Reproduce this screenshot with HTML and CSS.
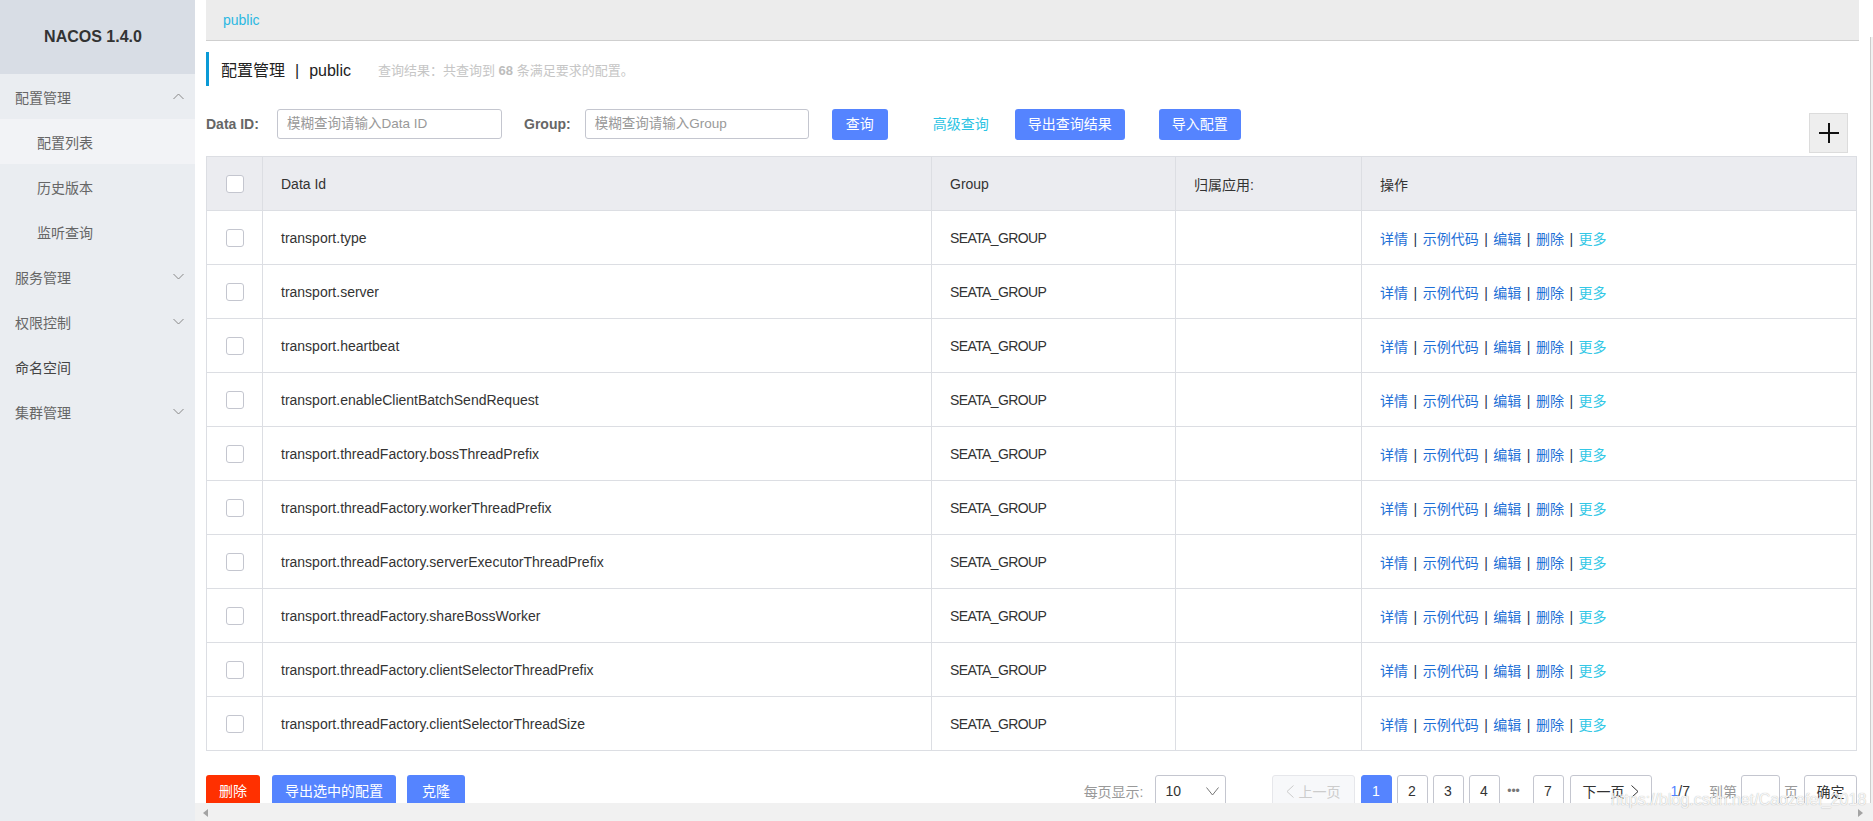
FILE: index.html
```html
<!DOCTYPE html>
<html lang="zh-CN">
<head>
<meta charset="utf-8">
<title>NACOS 1.4.0</title>
<link rel="stylesheet" href="styles.css">
</head>
<body>
<div class="app">
  <aside class="sidebar">
    <div class="brand">NACOS 1.4.0</div>
    <ul class="menu">
      <li class="group"><span>配置管理</span><svg class="chev" viewBox="0 0 11 7" width="11" height="7"><polyline points="0.5,6 5.5,1 10.5,6"/></svg></li>
      <li class="sub active">配置列表</li>
      <li class="sub">历史版本</li>
      <li class="sub">监听查询</li>
      <li class="group"><span>服务管理</span><svg class="chev" viewBox="0 0 11 7" width="11" height="7"><polyline points="0.5,1 5.5,6 10.5,1"/></svg></li>
      <li class="group"><span>权限控制</span><svg class="chev" viewBox="0 0 11 7" width="11" height="7"><polyline points="0.5,1 5.5,6 10.5,1"/></svg></li>
      <li class="group dark"><span>命名空间</span></li>
      <li class="group"><span>集群管理</span><svg class="chev" viewBox="0 0 11 7" width="11" height="7"><polyline points="0.5,1 5.5,6 10.5,1"/></svg></li>
    </ul>
  </aside>

  <main class="main">
    <div class="ns-bar"><span class="ns-link">public</span></div>

    <div class="title-row">
      <span class="title">配置管理<span class="title-sep">|</span>public</span>
      <span class="summary">查询结果：共查询到 <b>68</b> 条满足要求的配置。</span>
    </div>

    <div class="filter-row">
      <span class="f-label id-label">Data ID:</span>
      <div class="f-input">模糊查询请输入Data ID</div>
      <span class="f-label group-label">Group:</span>
      <div class="f-input">模糊查询请输入Group</div>
      <button class="btn btn-query">查询</button>
      <span class="adv-link">高级查询</span>
      <button class="btn btn-export">导出查询结果</button>
      <button class="btn btn-import">导入配置</button>
      <button class="plus-btn" aria-label="新建">
        <svg viewBox="0 0 22 22" width="22" height="22"><line x1="1" y1="11" x2="21" y2="11"/><line x1="11" y1="1" x2="11" y2="21"/></svg>
      </button>
    </div>

    <table class="cfg-table">
      <colgroup>
        <col class="c-check"><col class="c-id"><col class="c-group"><col class="c-app"><col>
      </colgroup>
      <thead>
        <tr><th class="cb-cell"><span class="cb"></span></th><th>Data Id</th><th>Group</th><th>归属应用:</th><th>操作</th></tr>
      </thead>
      <tbody>
        <tr><td class="cb-cell"><span class="cb"></span></td><td>transport.type</td><td class="grp">SEATA_GROUP</td><td></td><td class="ops"><a>详情</a><i>|</i><a>示例代码</a><i>|</i><a>编辑</a><i>|</i><a>删除</a><i>|</i><a class="more">更多</a></td></tr>
        <tr><td class="cb-cell"><span class="cb"></span></td><td>transport.server</td><td class="grp">SEATA_GROUP</td><td></td><td class="ops"><a>详情</a><i>|</i><a>示例代码</a><i>|</i><a>编辑</a><i>|</i><a>删除</a><i>|</i><a class="more">更多</a></td></tr>
        <tr><td class="cb-cell"><span class="cb"></span></td><td>transport.heartbeat</td><td class="grp">SEATA_GROUP</td><td></td><td class="ops"><a>详情</a><i>|</i><a>示例代码</a><i>|</i><a>编辑</a><i>|</i><a>删除</a><i>|</i><a class="more">更多</a></td></tr>
        <tr><td class="cb-cell"><span class="cb"></span></td><td>transport.enableClientBatchSendRequest</td><td class="grp">SEATA_GROUP</td><td></td><td class="ops"><a>详情</a><i>|</i><a>示例代码</a><i>|</i><a>编辑</a><i>|</i><a>删除</a><i>|</i><a class="more">更多</a></td></tr>
        <tr><td class="cb-cell"><span class="cb"></span></td><td>transport.threadFactory.bossThreadPrefix</td><td class="grp">SEATA_GROUP</td><td></td><td class="ops"><a>详情</a><i>|</i><a>示例代码</a><i>|</i><a>编辑</a><i>|</i><a>删除</a><i>|</i><a class="more">更多</a></td></tr>
        <tr><td class="cb-cell"><span class="cb"></span></td><td>transport.threadFactory.workerThreadPrefix</td><td class="grp">SEATA_GROUP</td><td></td><td class="ops"><a>详情</a><i>|</i><a>示例代码</a><i>|</i><a>编辑</a><i>|</i><a>删除</a><i>|</i><a class="more">更多</a></td></tr>
        <tr><td class="cb-cell"><span class="cb"></span></td><td>transport.threadFactory.serverExecutorThreadPrefix</td><td class="grp">SEATA_GROUP</td><td></td><td class="ops"><a>详情</a><i>|</i><a>示例代码</a><i>|</i><a>编辑</a><i>|</i><a>删除</a><i>|</i><a class="more">更多</a></td></tr>
        <tr><td class="cb-cell"><span class="cb"></span></td><td>transport.threadFactory.shareBossWorker</td><td class="grp">SEATA_GROUP</td><td></td><td class="ops"><a>详情</a><i>|</i><a>示例代码</a><i>|</i><a>编辑</a><i>|</i><a>删除</a><i>|</i><a class="more">更多</a></td></tr>
        <tr><td class="cb-cell"><span class="cb"></span></td><td>transport.threadFactory.clientSelectorThreadPrefix</td><td class="grp">SEATA_GROUP</td><td></td><td class="ops"><a>详情</a><i>|</i><a>示例代码</a><i>|</i><a>编辑</a><i>|</i><a>删除</a><i>|</i><a class="more">更多</a></td></tr>
        <tr><td class="cb-cell"><span class="cb"></span></td><td>transport.threadFactory.clientSelectorThreadSize</td><td class="grp">SEATA_GROUP</td><td></td><td class="ops"><a>详情</a><i>|</i><a>示例代码</a><i>|</i><a>编辑</a><i>|</i><a>删除</a><i>|</i><a class="more">更多</a></td></tr>
      </tbody>
    </table>

    <div class="footer-row">
      <button class="btn btn-danger">删除</button>
      <button class="btn btn-foot">导出选中的配置</button>
      <button class="btn btn-foot">克隆</button>

      <div class="pager">
        <span class="page-size-label">每页显示:</span>
        <div class="page-size">
          <span>10</span>
          <svg viewBox="0 0 13 9" width="13" height="9"><polyline points="0.5,0.5 6.5,8 12.5,0.5"/></svg>
        </div>
        <div class="pages">
          <span class="pg pg-prev disabled">
            <svg viewBox="0 0 8 13" width="8" height="13"><polyline points="7.5,0.5 1,6.5 7.5,12.5"/></svg>上一页
          </span>
          <span class="pg num current">1</span>
          <span class="pg num">2</span>
          <span class="pg num">3</span>
          <span class="pg num">4</span>
          <span class="pg-ellipsis">•••</span>
          <span class="pg num">7</span>
          <span class="pg pg-next">下一页
            <svg viewBox="0 0 8 13" width="8" height="13"><polyline points="0.5,0.5 7,6.5 0.5,12.5"/></svg>
          </span>
        </div>
        <span class="pg-display"><em>1</em>/7</span>
        <span class="pg-goto">到第</span>
        <div class="pg-input"></div>
        <span class="pg-unit">页</span>
        <span class="pg pg-ok">确定</span>
      </div>
    </div>
  </main>

  <div class="vscroll"></div>
  <div class="hscroll">
    <svg class="arr-l" viewBox="0 0 5 8" width="5" height="8"><polygon points="5,0 0,4 5,8"/></svg>
    <svg class="arr-r" viewBox="0 0 5 8" width="5" height="8"><polygon points="0,0 5,4 0,8"/></svg>
  </div>
  <div class="watermark">https://blog.csdn.net/Caozefei_2018</div>
</div>
</body>
</html>
```
FILE: styles.css
```css
* { box-sizing: border-box; }
html, body { margin: 0; height: 100%; }
body {
  font-family: "Liberation Sans", "Noto Sans CJK SC", sans-serif;
  font-size: 14px;
  color: #333;
  background: #fff;
  overflow: hidden;
}

.app {
  position: relative;
  display: grid;
  grid-template-columns: 195px 1fr;
  height: 821px;
  width: 1873px;
}

/* ---------- sidebar ---------- */
.sidebar { background: #eaedf1; }
.brand {
  height: 74px;
  background: #d8dde5;
  display: flex;
  align-items: center;
  justify-content: center;
  padding-right: 9px;
  font-weight: bold;
  font-size: 16px;
  color: #333;
}
.menu { list-style: none; margin: 0; padding: 0; }
.menu li {
  height: 45px;
  display: flex;
  align-items: center;
  justify-content: space-between;
  padding: 0 11px 0 15px;
  color: #666;
  font-size: 14px;
}
.menu li.sub { padding-left: 37px; }
.menu li.active { background: #f2f3f6; }
.menu li.dark { color: #444; }
.chev { fill: none; stroke: #888; stroke-width: 1; }

/* ---------- main ---------- */
.main { padding: 0 15px 0 11px; min-width: 0; }

.ns-bar {
  height: 41px;
  background: #ececec;
  border-bottom: 1px solid #cfcfcf;
  padding-left: 17px;
  display: flex;
  align-items: center;
  margin-right: -1px;
}
.ns-link { color: #2bb8e2; font-size: 14px; }

.title-row {
  margin-top: 11px;
  height: 34px;
  border-left: 3px solid #0a9ad6;
  padding-left: 12px;
  display: flex;
  align-items: center;
}
.title { font-size: 16px; color: #222; }
.title-sep { margin: 0 10px; }
.summary { margin-left: 27px; font-size: 13px; color: #c6c6c6; }
.summary b { color: #bdbdbd; }

.filter-row {
  margin-top: 23px;
  height: 44px;
  display: flex;
  align-items: flex-start;
}
.f-label {
  font-weight: bold;
  color: #666;
  line-height: 30px;
  margin-right: 13px;
}
.id-label { width: 58px; margin-right: 13px; }
.group-label { margin-left: 22px; margin-right: 14px; }
.f-input {
  width: 225px;
  height: 30px;
  border: 1px solid #c4c6cf;
  border-radius: 3px;
  padding: 0 9px;
  line-height: 28px;
  color: #999;
  font-size: 13.5px;
}
.f-input + .group-label + .f-input { width: 224px; }
.btn {
  height: 31px;
  padding: 0 14px;
  border: none;
  border-radius: 3px;
  background: #5584ff;
  color: #fff;
  font-family: inherit;
  font-size: 14px;
  line-height: 31px;
}
.btn-query { margin-left: 23px; }
.adv-link { margin-left: 45px; line-height: 30px; color: #2bc3e3; }
.btn-export { margin-left: 26px; padding: 0 13px; }
.btn-import { margin-left: 34px; padding: 0 13px; }
.plus-btn {
  margin-left: auto;
  margin-right: 10px;
  margin-top: 4px;
  width: 39px;
  height: 40px;
  padding: 0;
  background: #eeeeee;
  border: 1px solid #dcdcdc;
  display: flex;
  align-items: center;
  justify-content: center;
}
.plus-btn svg { stroke: #111; stroke-width: 2; }

/* ---------- table ---------- */
.cfg-table {
  width: calc(100% - 1px);
  border-collapse: collapse;
  table-layout: fixed;
  margin-top: 3px;
}
.c-check { width: 56px; }
.c-id { width: 669px; }
.c-group { width: 244px; }
.c-app { width: 186px; }
.cfg-table tr { height: 54px; }
.cfg-table th,
.cfg-table td {
  border: 1px solid #dcdee3;
  padding: 0 0 0 18px;
  text-align: left;
  font-weight: normal;
  font-size: 14px;
  color: #333;
  white-space: nowrap;
}
.cfg-table th { background: #ebecf0; }
.cfg-table .cb-cell { padding: 0; text-align: center; }
.cb {
  display: inline-block;
  width: 18px;
  height: 18px;
  border: 1px solid #c4c6cf;
  border-radius: 3px;
  background: #fff;
  vertical-align: middle;
}
.grp { letter-spacing: -0.6px; font-size: 13.5px; }
.ops a { color: #1e6fd6; }
.ops i { font-style: normal; color: #2a3550; margin: 0 5.5px; }
.ops a.more { color: #33c8e6; }

/* ---------- footer ---------- */
.footer-row {
  margin-top: 24px;
  height: 32px;
  display: flex;
  align-items: center;
}
.btn-danger { background: #ff3000; height: 32px; padding: 0 13px; }
.btn-foot { height: 32px; margin-left: 12px; padding: 0 13px; }
.btn-foot + .btn-foot { margin-left: 11px; padding: 0 15px; }

.pager {
  margin-left: auto;
  margin-right: 1px;
  display: flex;
  align-items: center;
  height: 32px;
}
.page-size-label { color: #999; }
.page-size {
  margin-left: 11px;
  width: 71px;
  height: 32px;
  border: 1px solid #c4c6cf;
  border-radius: 3px;
  padding: 0 6px 0 10px;
  display: flex;
  align-items: center;
  justify-content: space-between;
  color: #333;
}
.page-size svg { fill: none; stroke: #777; stroke-width: 1; }
.pages { margin-left: 46px; display: flex; align-items: center; }
.pg {
  height: 32px;
  border: 1px solid #c4c6cf;
  border-radius: 3px;
  background: #fff;
  display: flex;
  align-items: center;
  justify-content: center;
  color: #333;
}
.pg.num { width: 31px; margin-left: 5px; }
.pg.current { background: #5584ff; border-color: #5584ff; color: #fff; margin-left: 6px; }
.pg-prev { width: 83px; gap: 5px; }
.pg-prev.disabled { background: #f7f8fa; border-color: #e6e7eb; color: #ccc; }
.pg-prev svg { fill: none; stroke: #ccc; stroke-width: 1; }
.pg-ellipsis {
  width: 28px;
  text-align: center;
  color: #777;
  font-size: 12px;
  letter-spacing: 0;
}
.pg-next { width: 82px; margin-left: 6px; gap: 6px; }
.pg-next svg { fill: none; stroke: #333; stroke-width: 1; }
.pg-display { margin-left: 19px; color: #333; }
.pg-display em { font-style: normal; color: #5584ff; }
.pg-goto { margin-left: 19px; color: #999; }
.pg-input {
  margin-left: 4px;
  width: 39px;
  height: 32px;
  border: 1px solid #c4c6cf;
  border-radius: 3px;
}
.pg-unit { margin-left: 4px; color: #999; }
.pg-ok { margin-left: 6px; width: 53px; }

/* ---------- overlays: browser scrollbars & watermark ---------- */
.vscroll {
  position: absolute;
  left: 1870px;
  top: 37px;
  width: 3px;
  height: 766px;
  background: #f1f1f1;
  border-left: 1px solid #cdcdcd;
}
.hscroll {
  position: absolute;
  left: 195px;
  right: 0;
  top: 803px;
  height: 18px;
  background: #f1f1f1;
}
.hscroll svg { position: absolute; top: 6px; fill: #a3a3a3; }
.hscroll .arr-l { left: 8px; }
.hscroll .arr-r { right: 10px; }
.watermark {
  position: absolute;
  left: 1611px;
  top: 791px;
  font-size: 16px;
  color: rgba(255, 255, 255, 0.9);
  text-shadow: 0 0 1px rgba(0, 0, 0, 0.35);
  white-space: nowrap;
}
```
